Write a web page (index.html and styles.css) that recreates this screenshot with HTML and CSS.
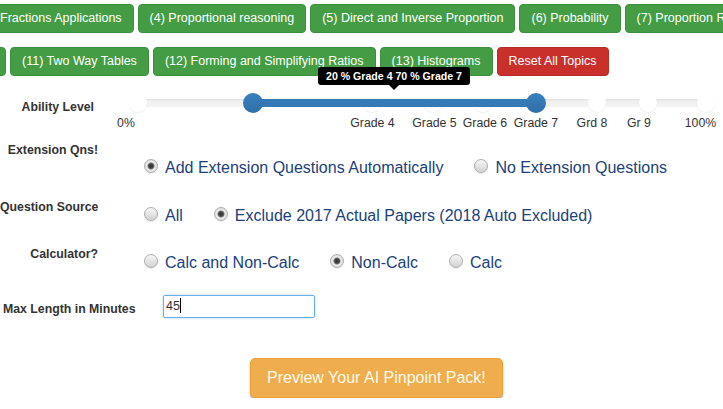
FILE: index.html
```html
<!DOCTYPE html>
<html lang="en">
<head>
<meta charset="utf-8">
<title>AI Pinpoint Pack</title>
<link rel="stylesheet" href="styles.css">
</head>
<body>
<div class="page">
  <nav class="topics">
    <div class="topic-row">
      <button class="btn btn-green first" type="button">Fractions Applications</button>
      <button class="btn btn-green" type="button">(4) Proportional reasoning</button>
      <button class="btn btn-green" type="button">(5) Direct and Inverse Proportion</button>
      <button class="btn btn-green" type="button">(6) Probability</button>
      <button class="btn btn-green" type="button">(7) Proportion Reasoning</button>
    </div>
    <div class="topic-row row-2">
      <span class="btn btn-green stub"></span>
      <button class="btn btn-green" type="button">(11) Two Way Tables</button>
      <button class="btn btn-green" type="button">(12) Forming and Simplifying Ratios</button>
      <button class="btn btn-green" type="button">(13) Histograms</button>
      <button class="btn btn-red" type="button">Reset All Topics</button>
    </div>
  </nav>

  <form class="options">
    <div class="field-row ability">
      <div class="field-label">Ability Level</div>
      <div class="slider-wrap">
        <div class="slider">
          <div class="track"></div>
          <span class="tick" style="left:0px"></span>
          <span class="tick" style="left:234px"></span>
          <span class="tick" style="left:295px"></span>
          <span class="tick" style="left:345px"></span>
          <span class="tick" style="left:398px"></span>
          <span class="tick" style="left:459px"></span>
          <span class="tick" style="left:510px"></span>
          <span class="tick" style="left:568px"></span>
          <div class="range" style="left:115px;width:283px"></div>
          <span class="handle" style="left:115px"></span>
          <span class="handle" style="left:398px"></span>
          <div class="tooltip" style="left:256px">20 % Grade 4 70 % Grade 7</div>
        </div>
        <div class="tick-labels">
          <span style="left:-12px">0%</span>
          <span style="left:234.5px">Grade 4</span>
          <span style="left:296.5px">Grade 5</span>
          <span style="left:347px">Grade 6</span>
          <span style="left:398px">Grade 7</span>
          <span style="left:454px">Grd 8</span>
          <span style="left:501px">Gr 9</span>
          <span style="left:562.5px">100%</span>
        </div>
      </div>
    </div>

    <div class="field-row radios r1">
      <div class="field-label">Extension Qns!</div>
      <div class="choices">
        <label class="choice"><input type="radio" name="ext" checked><span>Add Extension Questions Automatically</span></label>
        <label class="choice"><input type="radio" name="ext"><span>No Extension Questions</span></label>
      </div>
    </div>

    <div class="field-row radios r2">
      <div class="field-label">Question Source</div>
      <div class="choices">
        <label class="choice"><input type="radio" name="src"><span>All</span></label>
        <label class="choice"><input type="radio" name="src" checked><span>Exclude 2017 Actual Papers (2018 Auto Excluded)</span></label>
      </div>
    </div>

    <div class="field-row radios r3">
      <div class="field-label">Calculator?</div>
      <div class="choices">
        <label class="choice"><input type="radio" name="calc"><span>Calc and Non-Calc</span></label>
        <label class="choice"><input type="radio" name="calc" checked><span>Non-Calc</span></label>
        <label class="choice"><input type="radio" name="calc"><span>Calc</span></label>
      </div>
    </div>

    <div class="length-row">
      <div class="field-label">Max Length in Minutes</div>
      <div class="textbox" role="textbox">45<span class="caret"></span></div>
    </div>

    <div class="actions">
      <button class="btn-preview" type="button">Preview Your AI Pinpoint Pack!</button>
    </div>
  </form>
</div>
</body>
</html>
```

FILE: styles.css
```css
* { box-sizing: border-box; }

body {
  margin: 0;
  font-family: "Liberation Sans", Arial, sans-serif;
  background: #fff;
  color: #333;
  overflow: hidden;
}

.page { width: 723px; }

/* topic buttons */
.topic-row {
  display: flex;
  gap: 4px;
  white-space: nowrap;
  overflow: hidden;
  margin-top: 4px;
}
.row-2 { margin-top: 14px; }

.btn {
  flex: none;
  display: inline-block;
  font-family: "Liberation Sans", Arial, sans-serif;
  font-size: 12.5px;
  line-height: 15px;
  color: #fff;
  padding: 6px 11px;
  border: 1px solid transparent;
  border-radius: 4px;
  cursor: pointer;
}
.btn-green { background: #449d44; border-color: #3d8f3d; }
.btn-red { background: #c9302c; border-color: #b52b27; }
.first { margin-left: -12px; }
.stub { width: 10px; margin-left: -4px; padding: 0; }

/* form rows */
.field-row {
  display: grid;
  grid-template-columns: 98px 1fr;
  column-gap: 40px;
  align-items: start;
}
.field-label {
  font-weight: bold;
  font-size: 12.3px;
  line-height: 15px;
  text-align: right;
  color: #333;
  white-space: nowrap;
}

/* slider */
.ability { margin-top: 17px; }
.ability .field-label { padding-top: 6.5px; padding-right: 4px; }

.slider {
  position: relative;
  width: 568px;
  height: 20px;
}
.track {
  position: absolute;
  left: 0;
  right: 0;
  top: 6px;
  height: 8px;
  border-radius: 4px;
  background: linear-gradient(to bottom, #ededed, #f5f5f5);
  box-shadow: inset 0 1px 2px rgba(0,0,0,0.05);
}
.tick {
  position: absolute;
  top: 1px;
  width: 18px;
  height: 18px;
  margin-left: -9px;
  border-radius: 50%;
  background: #fff;
  box-shadow: 0 1px 2px rgba(0,0,0,0.07);
}
.range {
  position: absolute;
  top: 6px;
  height: 8px;
  background: #337ab7;
}
.handle {
  position: absolute;
  top: 0;
  width: 20px;
  height: 20px;
  margin-left: -10px;
  border-radius: 50%;
  background: linear-gradient(to bottom, #3a80bd, #2e6fa8);
}
.tooltip {
  position: absolute;
  bottom: 28px;
  transform: translateX(-50%);
  background: #000;
  color: #fff;
  font-weight: bold;
  font-size: 10.6px;
  line-height: 12px;
  padding: 3px 8px;
  border-radius: 3px;
  white-space: nowrap;
}
.tooltip::after {
  content: "";
  position: absolute;
  top: 100%;
  left: 50%;
  margin-left: -5px;
  border: 5px solid transparent;
  border-top-color: #000;
  border-bottom: 0;
}
.tick-labels {
  position: relative;
  width: 568px;
  height: 14px;
  margin-top: 3px;
  font-size: 12.3px;
  line-height: 14px;
  color: #333;
}
.tick-labels span {
  position: absolute;
  top: 0;
  transform: translateX(-50%);
  white-space: nowrap;
}

/* radio rows */
.r1 { margin-top: 13px; }
.r1 .choices { padding-top: 15px; }
.r2 { margin-top: 22px; }
.r3 { margin-top: 21px; }
.r2 .choices, .r3 .choices { padding-top: 6px; }

.choices {
  display: flex;
  padding-left: 6px;
  white-space: nowrap;
}
.choice {
  display: inline-flex;
  align-items: center;
  margin-right: 31px;
  font-size: 16px;
  line-height: 20px;
  color: #203f7a;
  cursor: pointer;
}
.choice input {
  -webkit-appearance: none;
  appearance: none;
  flex: none;
  width: 14px;
  height: 14px;
  margin: 0 7px 0 0;
  position: relative;
  top: -2px;
  border-radius: 50%;
  border: 1px solid #adadad;
  background: linear-gradient(to bottom, #f6f6f6, #d2d2d2);
  box-shadow: 0 1px 1px rgba(0,0,0,0.08);
}
.choice input:checked {
  background: radial-gradient(circle, #2f2f2f 0, #4a4a4a 2.4px, #8a8a8a 3.2px, #efefef 4px, #d4d4d4 7px);
}

/* max length */
.length-row {
  display: grid;
  grid-template-columns: 163px 152px;
  margin-top: 22px;
}
.length-row .field-label {
  text-align: left;
  padding-left: 3px;
  padding-top: 7px;
}
.textbox {
  height: 23px;
  border: 1px solid #66afe9;
  border-radius: 2px;
  box-shadow: 0 0 3px rgba(102,175,233,0.5);
  font-size: 12.5px;
  line-height: 20px;
  padding-left: 2px;
  color: #333;
}
.caret {
  display: inline-block;
  width: 1px;
  height: 15px;
  background: #000;
  vertical-align: -3px;
}

/* preview */
.actions {
  margin-top: 40px;
  padding-left: 250px;
}
.btn-preview {
  font-family: "Liberation Sans", Arial, sans-serif;
  font-size: 16px;
  line-height: 20px;
  padding: 9px 16px;
  color: #fffbea;
  background: #f0ad4e;
  border: 1px solid #eea236;
  border-radius: 5px;
  box-shadow: 0 2px 2px rgba(0,0,0,0.3);
  cursor: pointer;
}
```
